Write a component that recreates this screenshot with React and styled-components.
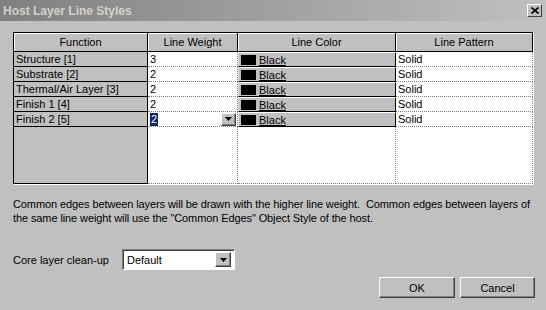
import React from 'react';
import styled, { createGlobalStyle } from 'styled-components';

const Global = createGlobalStyle`
  html, body { margin: 0; padding: 0; background: #c0c0c0; }
  body {
    width: 546px; height: 310px; overflow: hidden;
    font-family: "Liberation Sans", Arial, sans-serif; font-size: 11px; color: #000;
  }
  * { box-sizing: border-box; }
`;

const Window = styled.div`
  width: 546px; height: 310px; display: flex; flex-direction: column; background: #c0c0c0;
`;

const TitleBar = styled.div`
  height: 21px; flex: none; display: flex; align-items: center; justify-content: space-between;
  background: linear-gradient(to right, #808080, #c0c0c0);
  padding: 0 4px 0 3px;
`;

const Title = styled.span`
  font-weight: bold; font-size: 12px; color: #d4d0c8;
`;

const CloseBtn = styled.div`
  width: 15px; height: 13px; background: #c0c0c0;
  border: 1px solid; border-color: #fff #404040 #404040 #fff;
  display: flex; align-items: center; justify-content: center;
`;

const Body = styled.div`
  flex: 1; display: flex; flex-direction: column; padding: 11px 11px 0 13px;
`;

const Grid = styled.div`
  width: 520px; height: 152px; display: flex; flex-direction: column;
  border-top: 1px solid #000; border-left: 1px solid #000;
  box-shadow: 1px 1px 0 #fff;
  background: #fff;
`;

const Row = styled.div`
  display: grid; grid-template-columns: 134px 90px 158px 137px;
  height: ${p => p.$h}px; flex: ${p => (p.$fill ? 1 : 'none')};
`;

const HeadCell = styled.div`
  background: #c0c0c0; border-right: 1px solid #000; border-bottom: 1px solid #000;
  display: flex; align-items: center; justify-content: center;
  box-shadow: inset 1px 1px 0 #fff;
`;

const RowHead = styled.div`
  background: #c0c0c0; border-right: 1px solid #000; border-bottom: 1px solid #000;
  padding-left: 2px; display: flex; align-items: center; white-space: nowrap;
`;

const DataCell = styled.div`
  background: #fff; border-right: 1px dotted #808080; border-bottom: 1px dotted #808080;
  padding-left: 2px; display: flex; align-items: center; justify-content: space-between;
  white-space: nowrap;
`;

const ColorCell = styled.div`
  background: #c0c0c0; border: 1px solid; border-color: #fff #000 #000 #dcdcdc;
  display: flex; align-items: center; padding-left: 2px; gap: 3px;
`;

const Swatch = styled.span`
  width: 15px; height: 10px; background: #000; flex: none;
`;

const LinkText = styled.span`
  text-decoration: underline;
`;

const Selected = styled.span`
  background: #0a246a; color: #fff; padding: 0 1px; line-height: 13px;
`;

const ArrowBtn = styled.div`
  width: ${p => p.$w || 15}px; height: ${p => p.$hh || 13}px; flex: none; background: #c0c0c0;
  border: 1px solid; border-color: #fff #404040 #404040 #fff;
  box-shadow: inset -1px -1px 0 #808080;
  display: flex; align-items: center; justify-content: center;
  margin-right: 1px;
`;

const Note = styled.p`
  margin: 13px 0 0 0; line-height: 14px; white-space: nowrap; letter-spacing: -0.1px;
`;

const CoreRow = styled.div`
  margin-top: 24px; display: flex; align-items: center;
`;

const Label = styled.span`
  width: 109px; flex: none;
`;

const Select = styled.div`
  width: 113px; height: 21px; background: #fff;
  border: 1px solid; border-color: #808080 #fff #fff #808080;
  box-shadow: inset 1px 1px 0 #404040;
  display: flex; align-items: center; justify-content: space-between;
  padding: 2px 2px 2px 4px;
`;

const Buttons = styled.div`
  margin-top: 7px; display: flex; justify-content: flex-end; gap: 5px;
`;

const Button = styled.div`
  width: ${p => p.$w}px; height: 21px; background: #c0c0c0;
  border: 1px solid; border-color: #fff #404040 #404040 #fff;
  box-shadow: inset -1px -1px 0 #808080;
  display: flex; align-items: center; justify-content: center;
`;

const Arrow = () => (
  <svg width="7" height="4" viewBox="0 0 7 4">
    <path d="M0 0h7L3.5 4z" fill="#000" />
  </svg>
);

const CloseIcon = () => (
  <svg width="8" height="7" viewBox="0 0 8 7">
    <path d="M0.5 0.5L7.5 6.5M7.5 0.5L0.5 6.5" stroke="#000" strokeWidth="1.6" />
  </svg>
);

const rows = [
  { name: 'Structure [1]', w: '3' },
  { name: 'Substrate [2]', w: '2' },
  { name: 'Thermal/Air Layer [3]', w: '2' },
  { name: 'Finish 1 [4]', w: '2' },
  { name: 'Finish 2 [5]', w: '2', sel: true },
];

export default function App() {
  return (
    <>
      <Global />
      <Window>
        <TitleBar>
          <Title>Host Layer Line Styles</Title>
          <CloseBtn><CloseIcon /></CloseBtn>
        </TitleBar>
        <Body>
          <Grid>
            <Row $h={19}>
              <HeadCell>Function</HeadCell>
              <HeadCell>Line Weight</HeadCell>
              <HeadCell>Line Color</HeadCell>
              <HeadCell>Line Pattern</HeadCell>
            </Row>
            {rows.map(r => (
              <Row $h={15} key={r.name}>
                <RowHead>{r.name}</RowHead>
                <DataCell>
                  {r.sel ? <Selected>{r.w}</Selected> : <span>{r.w}</span>}
                  {r.sel && <ArrowBtn><Arrow /></ArrowBtn>}
                </DataCell>
                <ColorCell><Swatch /><LinkText>Black</LinkText></ColorCell>
                <DataCell>Solid</DataCell>
              </Row>
            ))}
            <Row $fill>
              <RowHead />
              <DataCell />
              <DataCell />
              <DataCell />
            </Row>
          </Grid>
          <Note>
            Common edges between layers will be drawn with the higher line weight.&nbsp; Common edges between layers of
            <br />
            the same line weight will use the "Common Edges" Object Style of the host.
          </Note>
          <CoreRow>
            <Label>Core layer clean-up</Label>
            <Select>
              <span>Default</span>
              <ArrowBtn $w={16} $hh={15}><Arrow /></ArrowBtn>
            </Select>
          </CoreRow>
          <Buttons>
            <Button $w={76}>OK</Button>
            <Button $w={75}>Cancel</Button>
          </Buttons>
        </Body>
      </Window>
    </>
  );
}
